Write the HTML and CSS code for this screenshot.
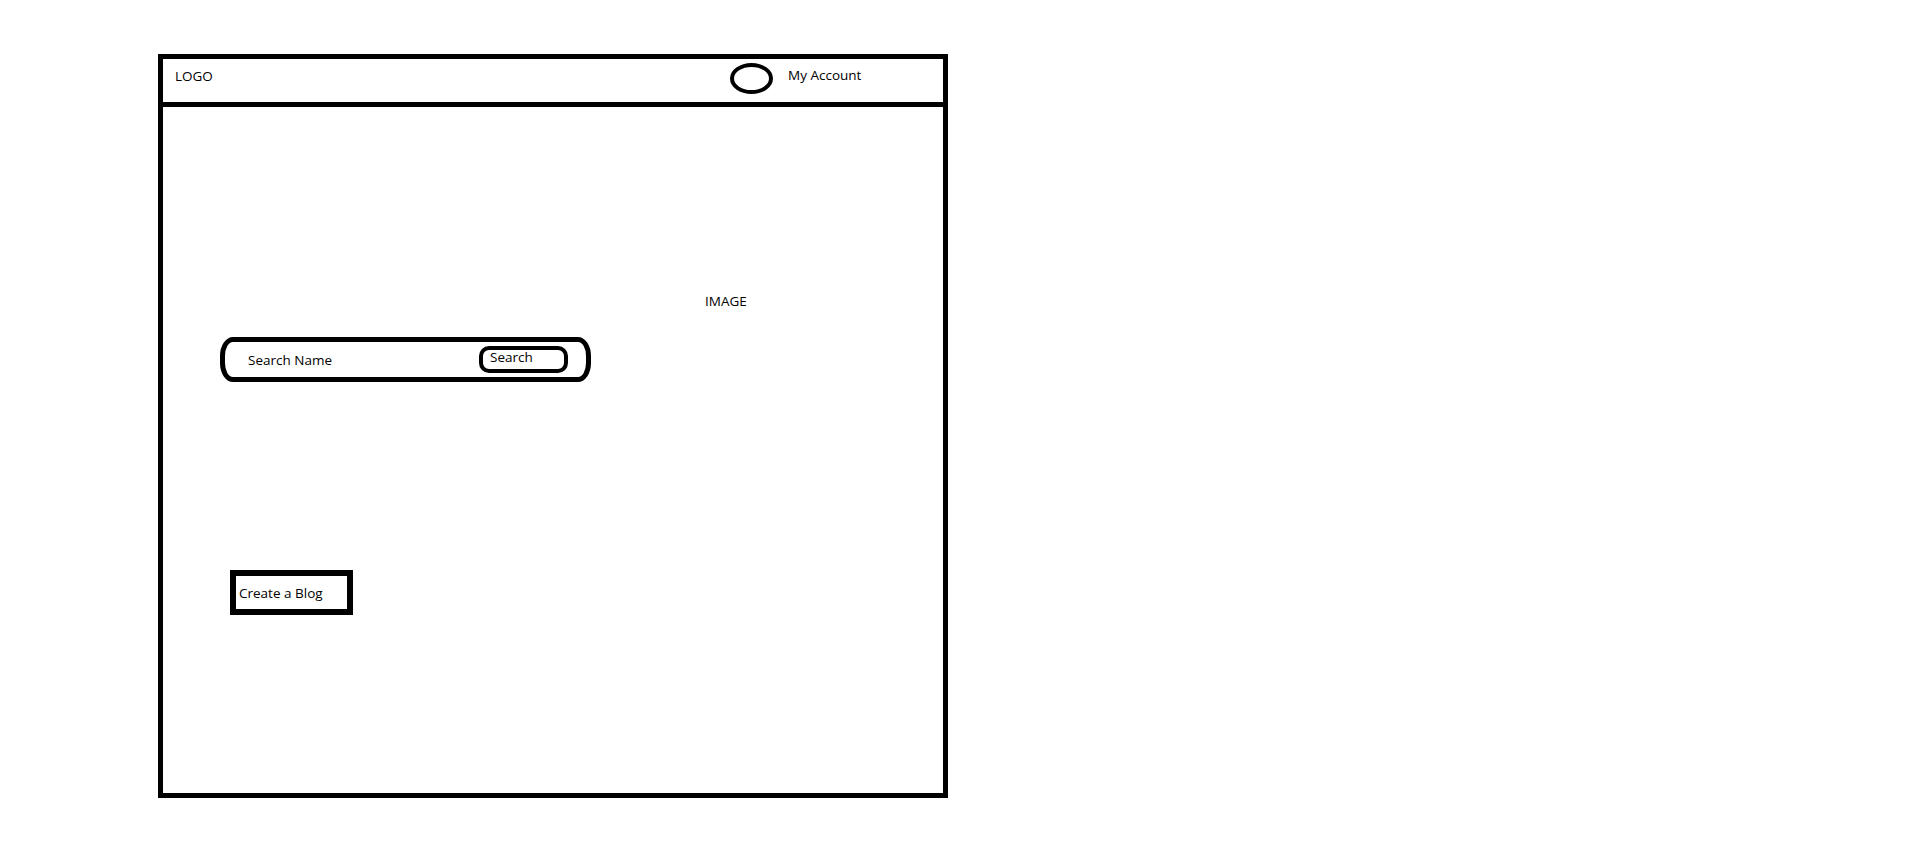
FILE: index.html
```html
<!DOCTYPE html>
<html lang="en">
<head>
<meta charset="utf-8">
<title>Blog Home Wireframe</title>
<link rel="stylesheet" href="styles.css">
</head>
<body>
  <div class="page">
    <div class="frame">
      <header class="topbar">
        <div class="logo">LOGO</div>
        <div class="account">
          <span class="avatar"></span>
          <span class="account-label">My Account</span>
        </div>
      </header>
      <main class="content">
        <div class="hero-label">IMAGE</div>
        <form class="search" onsubmit="return false;">
          <span class="search-placeholder">Search Name</span>
          <button class="search-btn" type="button">Search</button>
        </form>
        <button class="create-btn" type="button">Create a Blog</button>
      </main>
    </div>
  </div>
</body>
</html>
```

FILE: styles.css
```css
html, body {
  margin: 0;
  padding: 0;
  background: #ffffff;
}

body {
  font-family: "Open Sans", "Liberation Sans", sans-serif;
  font-size: 13.5px;
  line-height: 18px;
  color: #000000;
}

.page {
  padding: 54px 0 0 158px;
}

.frame {
  box-sizing: border-box;
  width: 790px;
  height: 744px;
  border: 5px solid #000;
  display: flex;
  flex-direction: column;
}

.topbar {
  box-sizing: border-box;
  height: 48px;
  border-bottom: 5px solid #000;
  display: flex;
  align-items: flex-start;
  padding-left: 12px;
}

.logo {
  margin-top: 8px;
}

.account {
  margin-left: auto;
  display: flex;
  align-items: flex-start;
}

.avatar {
  box-sizing: border-box;
  width: 43px;
  height: 31px;
  margin-top: 4px;
  border: 4px solid #000;
  border-radius: 50%;
}

.account-label {
  width: 155px;
  margin-left: 15px;
  margin-top: 7px;
}

.content {
  flex: 1;
  padding: 185px 0 0 57px;
}

.hero-label {
  padding-left: 485px;
}

.search {
  box-sizing: border-box;
  width: 371px;
  height: 45px;
  margin: 27px 0 0 0;
  border: 5px solid #000;
  border-radius: 13px / 19px;
  display: flex;
  align-items: flex-start;
}

.search-placeholder {
  margin: 9px 0 0 23px;
}

.search-btn {
  box-sizing: border-box;
  width: 89px;
  height: 27px;
  margin: 4px 18px 0 auto;
  padding: 0 0 4px 7px;
  border: 4px solid #000;
  border-radius: 10px;
  background: #fff;
  font: inherit;
  line-height: 15px;
  color: #000;
  text-align: left;
  display: block;
}

.create-btn {
  box-sizing: border-box;
  display: block;
  width: 123px;
  height: 45px;
  margin: 188px 0 0 10px;
  padding: 0 0 0 3px;
  border: 6px solid #000;
  border-radius: 0;
  background: #fff;
  font: inherit;
  line-height: 18px;
  color: #000;
  text-align: left;
}
```
